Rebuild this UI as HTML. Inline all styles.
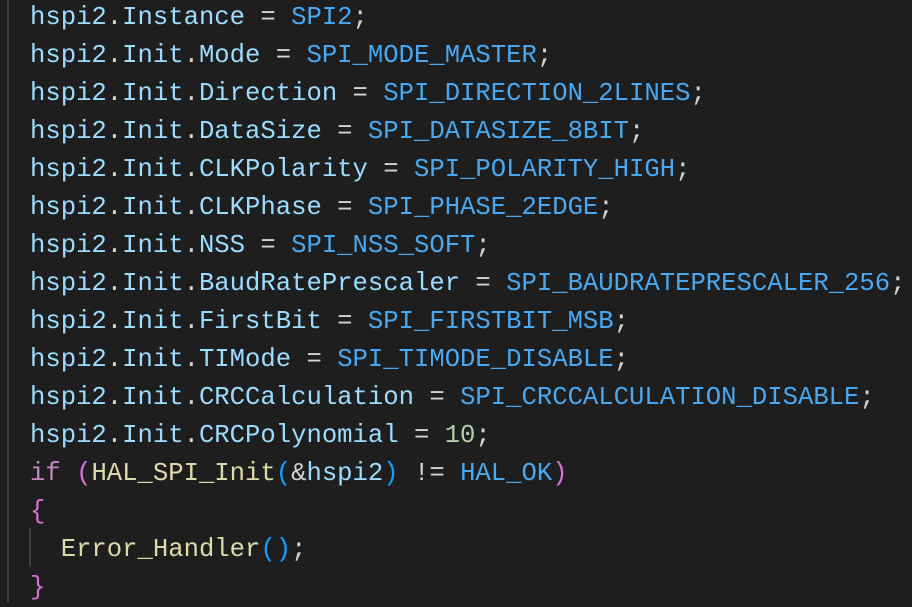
<!DOCTYPE html>
<html><head><style>
html,body{margin:0;padding:0;background:#1e1e1e;width:912px;height:602px;overflow:hidden}
.g1{position:absolute;left:7px;top:0;width:2px;height:602px;background:#404040}
.g2{position:absolute;left:29px;top:528px;width:2px;height:38px;background:#404040}
pre{position:absolute;left:30px;top:-1px;margin:0;font-family:"Liberation Mono",monospace;font-size:25.6px;line-height:38px;color:#d4d4d4}
.v{color:#9cdcfe}.c{color:#4aa8f0}.k{color:#c586c0}.f{color:#dcdcaa}.n{color:#b5cea8}.p{color:#da70d6}.b{color:#179fff}
</style></head><body>
<div class="g1"></div><div class="g2"></div>
<pre><span class="v">hspi2</span>.<span class="v">Instance</span> = <span class="c">SPI2</span>;
<span class="v">hspi2</span>.<span class="v">Init</span>.<span class="v">Mode</span> = <span class="c">SPI_MODE_MASTER</span>;
<span class="v">hspi2</span>.<span class="v">Init</span>.<span class="v">Direction</span> = <span class="c">SPI_DIRECTION_2LINES</span>;
<span class="v">hspi2</span>.<span class="v">Init</span>.<span class="v">DataSize</span> = <span class="c">SPI_DATASIZE_8BIT</span>;
<span class="v">hspi2</span>.<span class="v">Init</span>.<span class="v">CLKPolarity</span> = <span class="c">SPI_POLARITY_HIGH</span>;
<span class="v">hspi2</span>.<span class="v">Init</span>.<span class="v">CLKPhase</span> = <span class="c">SPI_PHASE_2EDGE</span>;
<span class="v">hspi2</span>.<span class="v">Init</span>.<span class="v">NSS</span> = <span class="c">SPI_NSS_SOFT</span>;
<span class="v">hspi2</span>.<span class="v">Init</span>.<span class="v">BaudRatePrescaler</span> = <span class="c">SPI_BAUDRATEPRESCALER_256</span>;
<span class="v">hspi2</span>.<span class="v">Init</span>.<span class="v">FirstBit</span> = <span class="c">SPI_FIRSTBIT_MSB</span>;
<span class="v">hspi2</span>.<span class="v">Init</span>.<span class="v">TIMode</span> = <span class="c">SPI_TIMODE_DISABLE</span>;
<span class="v">hspi2</span>.<span class="v">Init</span>.<span class="v">CRCCalculation</span> = <span class="c">SPI_CRCCALCULATION_DISABLE</span>;
<span class="v">hspi2</span>.<span class="v">Init</span>.<span class="v">CRCPolynomial</span> = <span class="n">10</span>;
<span class="k">if</span> <span class="p">(</span><span class="f">HAL_SPI_Init</span><span class="b">(</span>&amp;<span class="v">hspi2</span><span class="b">)</span> != <span class="c">HAL_OK</span><span class="p">)</span>
<span class="p">{</span>
  <span class="f">Error_Handler</span><span class="b">()</span>;
<span class="p">}</span></pre>
</body></html>
